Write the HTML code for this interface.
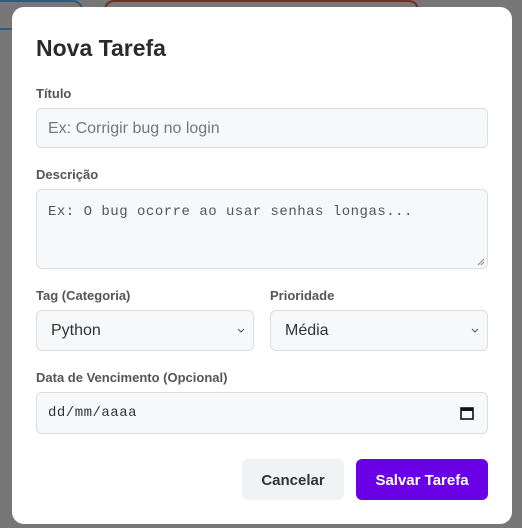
<!DOCTYPE html>
<html><head><meta charset="utf-8"><style>
*{box-sizing:border-box;margin:0;padding:0}
body{width:522px;height:528px;background:#777;position:relative;overflow:hidden;font-family:"Liberation Sans",sans-serif}
.b1{position:absolute;left:-20px;top:0;width:103px;height:30px;background:#777;border:2px solid #2d5a82;border-radius:10px}
.b2{position:absolute;left:104px;top:0;width:315px;height:30px;background:#777;border:2px solid #7a2a25;border-radius:10px}
.m{position:absolute;left:12px;top:7px;width:500px;height:517px;background:#fff;border-radius:12px}
h1{position:absolute;left:24px;top:28px;font-size:23px;font-weight:bold;color:#2b2b2b}
.l{position:absolute;font-size:13px;font-weight:bold;color:#555}
.f{position:absolute;background:#f7f8fa;border:1px solid #ddd;border-radius:6px;font-size:16px;color:#333}
.ph{color:#777}
.mono{font-family:"Liberation Mono",monospace;font-size:14px;letter-spacing:0.5px;color:#555}
.btn{position:absolute;top:452px;height:41px;border-radius:6px;font-size:15px;font-weight:bold;text-align:center;line-height:43px}
</style></head><body>
<div class="b1"></div><div class="b2"></div>
<div class="m">
<h1>Nova Tarefa</h1>
<div class="l" style="left:24px;top:79px">Título</div>
<div class="f ph" style="left:24px;top:101px;width:452px;height:40px;padding:11px 11px">Ex: Corrigir bug no login</div>
<div class="l" style="left:24px;top:160px">Descrição</div>
<div class="f mono" style="left:24px;top:182px;width:452px;height:80px;padding:14px 11px">Ex: O bug ocorre ao usar senhas longas...
<svg style="position:absolute;right:2px;bottom:2px" width="8" height="8"><path d="M7 1L1 7M7 4L4 7" stroke="#888"/></svg></div>
<div class="l" style="left:24px;top:281px">Tag (Categoria)</div>
<div class="f" style="left:24px;top:303px;width:218px;height:41px;padding:11px 14px">Python<svg style="position:absolute;right:8px;top:17px" width="8" height="6"><path d="M1 1l3 3 3-3" stroke="#555" fill="none"/></svg></div>
<div class="l" style="left:258px;top:281px">Prioridade</div>
<div class="f" style="left:258px;top:303px;width:218px;height:41px;padding:11px 14px">Média<svg style="position:absolute;right:8px;top:17px" width="8" height="6"><path d="M1 1l3 3 3-3" stroke="#555" fill="none"/></svg></div>
<div class="l" style="left:24px;top:363px">Data de Vencimento (Opcional)</div>
<div class="f mono" style="left:24px;top:385px;width:452px;height:42px;padding:12px 11px;color:#333">dd/mm/aaaa<svg style="position:absolute;right:13px;top:13px" width="14" height="14"><rect x="1" y="2" width="12" height="11" fill="none" stroke="#111" stroke-width="1.6"/><rect x="1" y="2" width="12" height="3" fill="#111"/></svg></div>
<div class="btn" style="left:230px;width:102px;background:#f1f2f4;color:#333">Cancelar</div>
<div class="btn" style="left:344px;width:132px;background:#6a00e6;color:#fff">Salvar Tarefa</div>
</div>
</body></html>
